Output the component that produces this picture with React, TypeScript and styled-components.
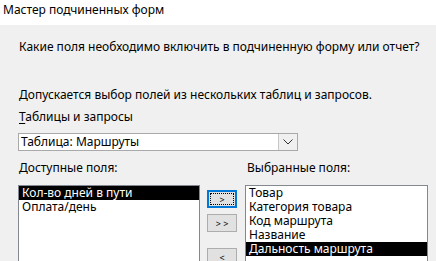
import React from "react";
import styled, { createGlobalStyle } from "styled-components";

const Global = createGlobalStyle`
  html, body { margin: 0; padding: 0; background: #f0f0f0; }
  body {
    font-family: "Noto Sans", "Open Sans", "DejaVu Sans", sans-serif;
    font-size: 12px;
    color: #000;
  }
`;

const Window = styled.div`
  width: 436px;
  height: 261px;
  overflow: hidden;
  background: #f0f0f0;
  display: flex;
  flex-direction: column;
`;

const TitleBar = styled.div`
  height: 25px;
  flex: none;
  background: #ffffff;
  padding-left: 3px;
  line-height: 20px;
  font-size: 12px;
  white-space: nowrap;
`;

const Content = styled.div`
  padding: 0 8px 0 18px;
  display: flex;
  flex-direction: column;
`;

const Text = styled.div<{ $top: number }>`
  margin-top: ${(p) => p.$top}px;
  padding-left: 1px;
  line-height: 16px;
  height: 16px;
  white-space: nowrap;
`;

const Accel = styled.span`
  text-decoration: underline;
  text-underline-offset: 2px;
`;

const Combo = styled.div`
  margin-top: 8px;
  width: 280px;
  height: 18px;
  box-sizing: border-box;
  border: 1px solid #a9a9a9;
  background: #fff;
  display: flex;
`;

const ComboValue = styled.div`
  flex: 1;
  padding-left: 2px;
  line-height: 16px;
  white-space: nowrap;
`;

const ComboButton = styled.div`
  width: 18px;
  border-left: 1px solid #c6c6c6;
  background: #f0f0f0;
  display: flex;
  align-items: center;
  justify-content: center;
`;

const LabelsRow = styled.div`
  margin-top: 9px;
  display: grid;
  grid-template-columns: 227px 1fr;
  line-height: 16px;
  height: 16px;
  white-space: nowrap;
`;

const LabelCell = styled.div`
  padding-left: 1px;
  &:nth-child(2) { padding-left: 2px; }
`;

const ListsRow = styled.div`
  margin-top: 9px;
  display: flex;
  align-items: flex-start;
`;

const ListBox = styled.div<{ $w: number }>`
  width: ${(p) => p.$w}px;
  height: 110px;
  flex: none;
  box-sizing: border-box;
  border: 1px solid #828790;
  background: #fff;
  padding-top: 0;
`;

const Item = styled.div<{ $sel?: boolean; $pad: number }>`
  height: 14px;
  line-height: 14px;
  padding-left: ${(p) => p.$pad}px;
  white-space: nowrap;
  background: ${(p) => (p.$sel ? "#000" : "transparent")};
  color: ${(p) => (p.$sel ? "#fff" : "#000")};
`;

const ButtonsCol = styled.div`
  width: 30px;
  margin: 5px 8px 0 7px;
  flex: none;
  display: flex;
  flex-direction: column;
`;

const Btn = styled.div<{ $focus?: boolean; $gap: number }>`
  margin-top: ${(p) => p.$gap}px;
  height: 18px;
  box-sizing: border-box;
  border: ${(p) => (p.$focus ? "2px solid #0078d7" : "1px solid #adadad")};
  background: #e1e1e1;
  display: flex;
  align-items: center;
  justify-content: center;
  font-size: 9px;
  line-height: 1;
  position: relative;
  white-space: pre;
`;

const FocusRing = styled.div`
  position: absolute;
  inset: 1px;
  border: 1px dotted #000;
`;

export default function App() {
  return (
    <Window>
      <Global />
      <TitleBar>Мастер подчиненных форм</TitleBar>
      <Content>
        <Text $top={14}>Какие поля необходимо включить в подчиненную форму или отчет?</Text>
        <Text $top={32}>Допускается выбор полей из нескольких таблиц и запросов.</Text>
        <Text $top={6}>
          <Accel>Т</Accel>аблицы и запросы
        </Text>
        <Combo>
          <ComboValue>Таблица: Маршруты</ComboValue>
          <ComboButton>
            <svg width="10" height="6" viewBox="0 0 10 6">
              <path d="M0.5 0.5 L5 5 L9.5 0.5" fill="none" stroke="#333" strokeWidth="1" />
            </svg>
          </ComboButton>
        </Combo>
        <LabelsRow>
          <LabelCell>Доступные поля:</LabelCell>
          <LabelCell>Выбранные поля:</LabelCell>
        </LabelsRow>
        <ListsRow>
          <ListBox $w={182}>
            <Item $pad={3} $sel>Кол-во дней в пути</Item>
            <Item $pad={3}>Оплата/день</Item>
          </ListBox>
          <ButtonsCol>
            <Btn $focus $gap={0}>
              <FocusRing />
              {">"}
            </Btn>
            <Btn $gap={6}>{"> >"}</Btn>
            <Btn $gap={16}>{"<"}</Btn>
          </ButtonsCol>
          <ListBox $w={183}>
            <Item $pad={3}>Товар</Item>
            <Item $pad={3}>Категория товара</Item>
            <Item $pad={3}>Код маршрута</Item>
            <Item $pad={3}>Название</Item>
            <Item $pad={3} $sel>Дальность маршрута</Item>
          </ListBox>
        </ListsRow>
      </Content>
    </Window>
  );
}
